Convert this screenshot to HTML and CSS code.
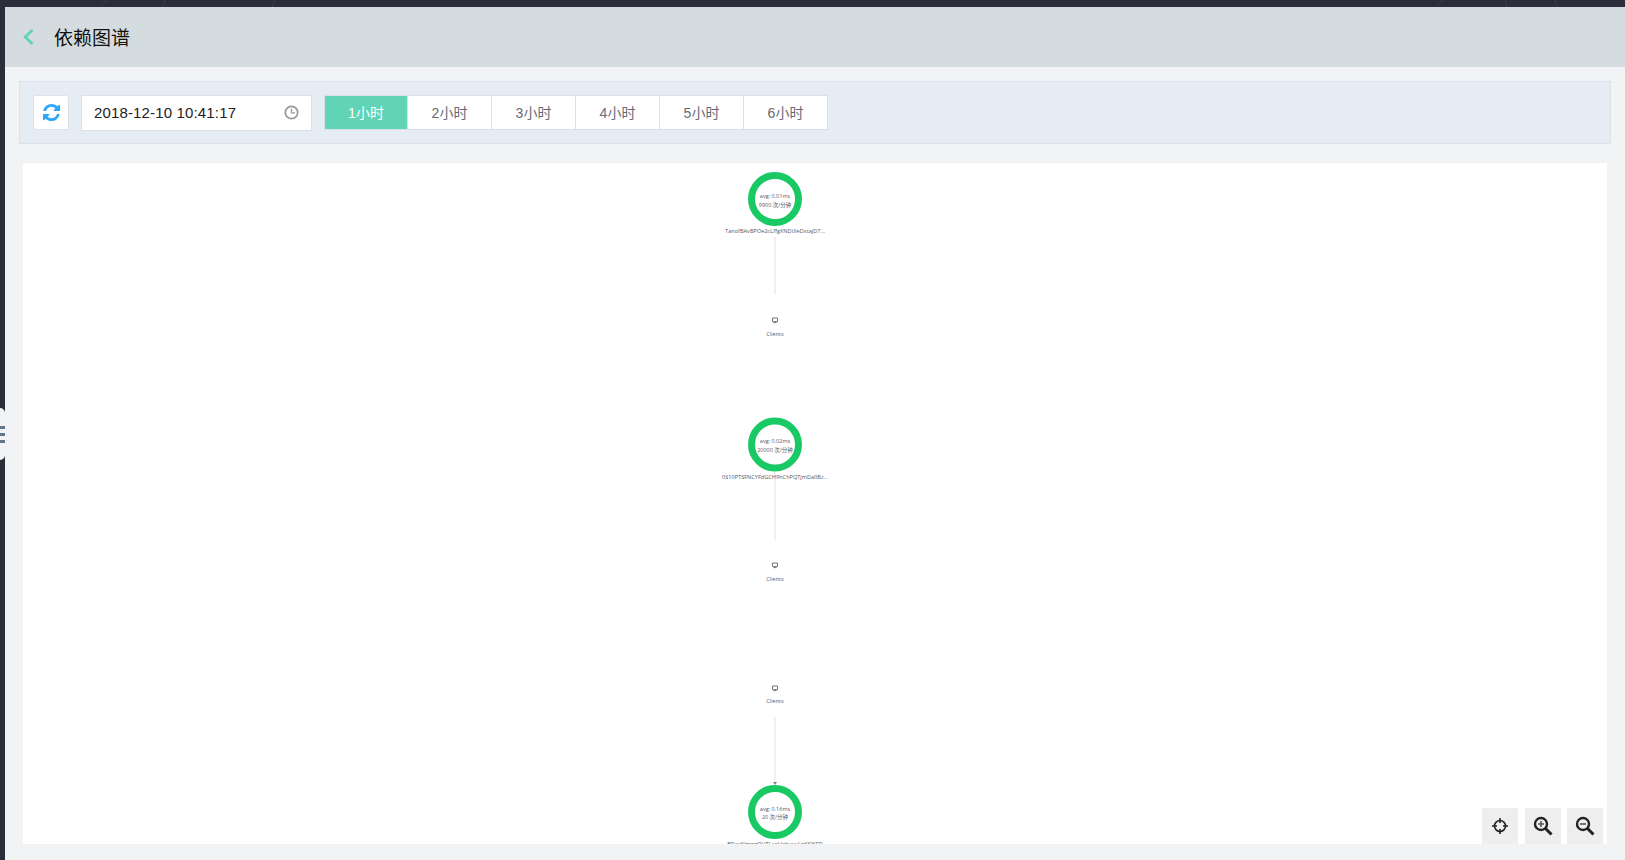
FILE: index.html
```html
<!DOCTYPE html>
<html>
<head>
    <meta charset="UTF-8">
    <title>依赖图谱</title>
    <link rel="stylesheet" href="styles.css">
</head>
<body>
    <svg class="backdrop" width="1625" height="7" viewBox="0 0 1625 7">
        <path d="M107 0 L101 7 M165 0 L162 7 M275 0 L272 7 M1442 0 L1436 7 M1505 0 L1507 7 M1555 0 L1558 7"></path>
    </svg>
    <div class="side-handle">
        <span></span>
        <span></span>
        <span></span>
    </div>
    <div class="page">
        <div class="header">
            <svg class="back-icon" width="12" height="16" viewBox="0 0 12 16">
                <path d="M10.5 1 L3.2 8 L10.5 15" fill="none" stroke="#5fd3b3" stroke-width="2.8"></path>
            </svg>
            <h1>依赖图谱</h1>
        </div>
        <div class="toolbar">
            <div class="refresh-button">
                <svg width="17" height="17" viewBox="0 0 1536 1536">
                    <path fill="#2ea6fb" d="M1511 928q0 5-1 7-64 268-268 434.5t-478 166.5q-146 0-282.5-55t-243.5-157l-129 129q-19 19-45 19t-45-19-19-45v-448q0-26 19-45t45-19h448q26 0 45 19t19 45-19 45l-137 137q71 66 161 102t187 36q134 0 250-65t186-179q11-17 53-117 8-23 30-23h192q13 0 22.5 9.5t9.5 22.5zm25-800v448q0 26-19 45t-45 19h-448q-26 0-45-19t-19-45 19-45l138-138q-148-137-349-137-134 0-250 65t-186 179q-11 17-53 117-8 23-30 23h-199q-13 0-22.5-9.5t-9.5-22.5v-7q65-268 270-434.5t480-166.5q146 0 284 55.5t245 156.5l130-129q19-19 45-19t45 19 19 45z"></path>
                </svg>
            </div>
            <div class="date-input">
                <span>2018-12-10 10:41:17</span>
                <svg width="15" height="15" viewBox="0 0 15 15">
                    <circle cx="7.5" cy="7.5" r="6.2" fill="none" stroke="#999999" stroke-width="1.8"></circle>
                    <path d="M7.5 3.8 V7.8 H11" fill="none" stroke="#999999" stroke-width="1.3"></path>
                </svg>
            </div>
            <div class="tabs">
                <div class="tab active">1小时</div>
                <div class="tab">2小时</div>
                <div class="tab">3小时</div>
                <div class="tab">4小时</div>
                <div class="tab">5小时</div>
                <div class="tab">6小时</div>
            </div>
        </div>
        <div class="canvas">
            <svg class="graph" width="1584" height="681" viewBox="23 163 1584 681">
                <g class="edge">
                    <line x1="775" y1="237" x2="775" y2="294"></line>
                    <line x1="775" y1="472" x2="775" y2="540"></line>
                    <line x1="775" y1="717" x2="775" y2="782"></line>
                </g>
                <path class="arrow" d="M773 782 H777 L775 785 Z"></path>

                <circle class="node" cx="775" cy="199" r="23.5"></circle>
                <text class="metric" x="775" y="198">avg: 0.01ms</text>
                <text class="metric" x="775" y="207">9900 次/分钟</text>
                <text class="name" x="775" y="233">TanofBAvBPOe2cLffgXNDtIIeDxtajD7...</text>

                <path class="client" d="M772.5 318 h5 v3.6 h-5 z M773.5 322.6 h3"></path>
                <text class="metric" x="775" y="336">Clients</text>

                <circle class="node" cx="775" cy="444.5" r="23.5"></circle>
                <text class="metric" x="775" y="443">avg: 0.02ms</text>
                <text class="metric" x="775" y="452">20000 次/分钟</text>
                <text class="name" x="775" y="479">0S10PTSFNCYFdGCH9hChPQTjmDa0Bz...</text>

                <path class="client" d="M772.5 563 h5 v3.6 h-5 z M773.5 567.6 h3"></path>
                <text class="metric" x="775" y="581">Clients</text>

                <path class="client" d="M772.5 686 h5 v3.6 h-5 z M773.5 690.6 h3"></path>
                <text class="metric" x="775" y="703">Clients</text>

                <circle class="node" cx="775" cy="812" r="23.5"></circle>
                <text class="metric" x="775" y="811">avg: 0.16ms</text>
                <text class="metric" x="775" y="819">20 次/分钟</text>
                <text class="name" x="775" y="846">BDcaKlmngQUTLaeUxbuvuLpKSIKFD</text>
            </svg>
            <div class="zoom-tools">
                <div class="zoom-button locate">
                    <svg width="18" height="18" viewBox="0 0 18 18">
                        <circle cx="9" cy="9" r="5.5" fill="none" stroke="#222222" stroke-width="1.6"></circle>
                        <path d="M9 1 V6 M9 12 V17 M1 9 H6 M12 9 H17" stroke="#222222" stroke-width="1.6"></path>
                    </svg>
                </div>
                <div class="zoom-button">
                    <svg width="20" height="20" viewBox="0 0 20 20">
                        <circle cx="8" cy="8" r="6" fill="none" stroke="#222222" stroke-width="2.4"></circle>
                        <path d="M12.5 12.5 L18.5 18.5" stroke="#222222" stroke-width="3"></path>
                        <path d="M5 8 H11 M8 5 V11" stroke="#555555" stroke-width="1.6"></path>
                    </svg>
                </div>
                <div class="zoom-button">
                    <svg width="20" height="20" viewBox="0 0 20 20">
                        <circle cx="8" cy="8" r="6" fill="none" stroke="#222222" stroke-width="2.4"></circle>
                        <path d="M12.5 12.5 L18.5 18.5" stroke="#222222" stroke-width="3"></path>
                        <path d="M5 8 H11" stroke="#555555" stroke-width="1.6"></path>
                    </svg>
                </div>
            </div>
        </div>
    </div>
</body>
</html>
```

FILE: styles.css
```css
html, body {
    margin: 0;
    padding: 0;
    height: 100%;
    overflow: hidden;
}

body {
    font-family: "Liberation Sans", "Noto Sans CJK SC", sans-serif;
    background-color: #2b2d3b;
}

.backdrop {
    position: absolute;
    left: 0;
    top: 0;
}

.backdrop path {
    stroke: #3a3d4a;
    stroke-width: 1px;
    fill: none;
}

.page {
    position: relative;
    height: 853px;
    margin: 7px 0 0 5px;
    background-color: #f2f3f5;
    display: flex;
    flex-direction: column;
}

.header {
    height: 60px;
    flex: none;
    display: flex;
    align-items: center;
    padding-left: 17px;
    background-color: #d4dcdf;
}

.header h1 {
    margin: -2px 0 0 20px;
    font-size: 19px;
    font-weight: normal;
    color: #111111;
}

.toolbar {
    height: 61px;
    flex: none;
    display: flex;
    align-items: center;
    margin: 14px 14px 0;
    padding-left: 13px;
    background-color: #e5ecf4;
    border: 1px solid #d8e0e9;
}

.refresh-button {
    width: 36px;
    height: 35px;
    display: flex;
    align-items: center;
    justify-content: center;
    background-color: #ffffff;
    border: 1px solid #dbe2ea;
    border-radius: 3px;
    box-sizing: border-box;
}

.date-input {
    width: 231px;
    height: 36px;
    margin-left: 12px;
    padding: 0 12px 0 12px;
    box-sizing: border-box;
    display: flex;
    align-items: center;
    justify-content: space-between;
    font-size: 15px;
    letter-spacing: 0.15px;
    color: #222222;
    background-color: #ffffff;
    border: 1px solid #d8e0e9;
}

.tabs {
    display: flex;
    margin-left: 12px;
}

.tab {
    width: 84px;
    height: 35px;
    box-sizing: border-box;
    line-height: 34px;
    text-align: center;
    font-size: 14px;
    color: #666a75;
    background-color: #ffffff;
    border: 1px solid #d8e0e9;
    border-left: none;
}

.tab:first-child {
    border-left: 1px solid #d8e0e9;
}

.tab.active {
    color: #ffffff;
    background-color: #60d4b4;
}

.canvas {
    position: relative;
    height: 681px;
    flex: none;
    margin: 19px 18px 0;
    background-color: #ffffff;
    overflow: hidden;
}

.graph {
    display: block;
}

.edge line {
    stroke: #e2e2e2;
    stroke-width: 1px;
}

.arrow {
    fill: #888888;
}

.node {
    fill: #ffffff;
    stroke: #19c964;
    stroke-width: 7px;
}

.metric,
.name {
    text-anchor: middle;
    fill: #555a66;
    font-family: "Open Sans", "Noto Sans CJK SC", sans-serif;
}

.metric {
    font-size: 5.5px;
}

.name {
    font-size: 5.6px;
}

.client {
    fill: none;
    stroke: #666666;
    stroke-width: 0.9px;
}

.zoom-tools {
    position: absolute;
    right: 4px;
    bottom: 0;
    display: flex;
    gap: 6px;
}

.zoom-button {
    width: 36px;
    height: 36px;
    display: flex;
    align-items: center;
    justify-content: center;
    background-color: #eeeeee;
}

.zoom-button.locate {
    margin-right: 1px;
}

.side-handle {
    position: absolute;
    left: 0;
    top: 408px;
    width: 5px;
    height: 52px;
    display: flex;
    flex-direction: column;
    justify-content: center;
    gap: 4px;
    background-color: #f2f3f5;
    border-radius: 0 5px 5px 0;
}

.side-handle span {
    display: block;
    height: 3px;
    background-color: #64748c;
}
```
